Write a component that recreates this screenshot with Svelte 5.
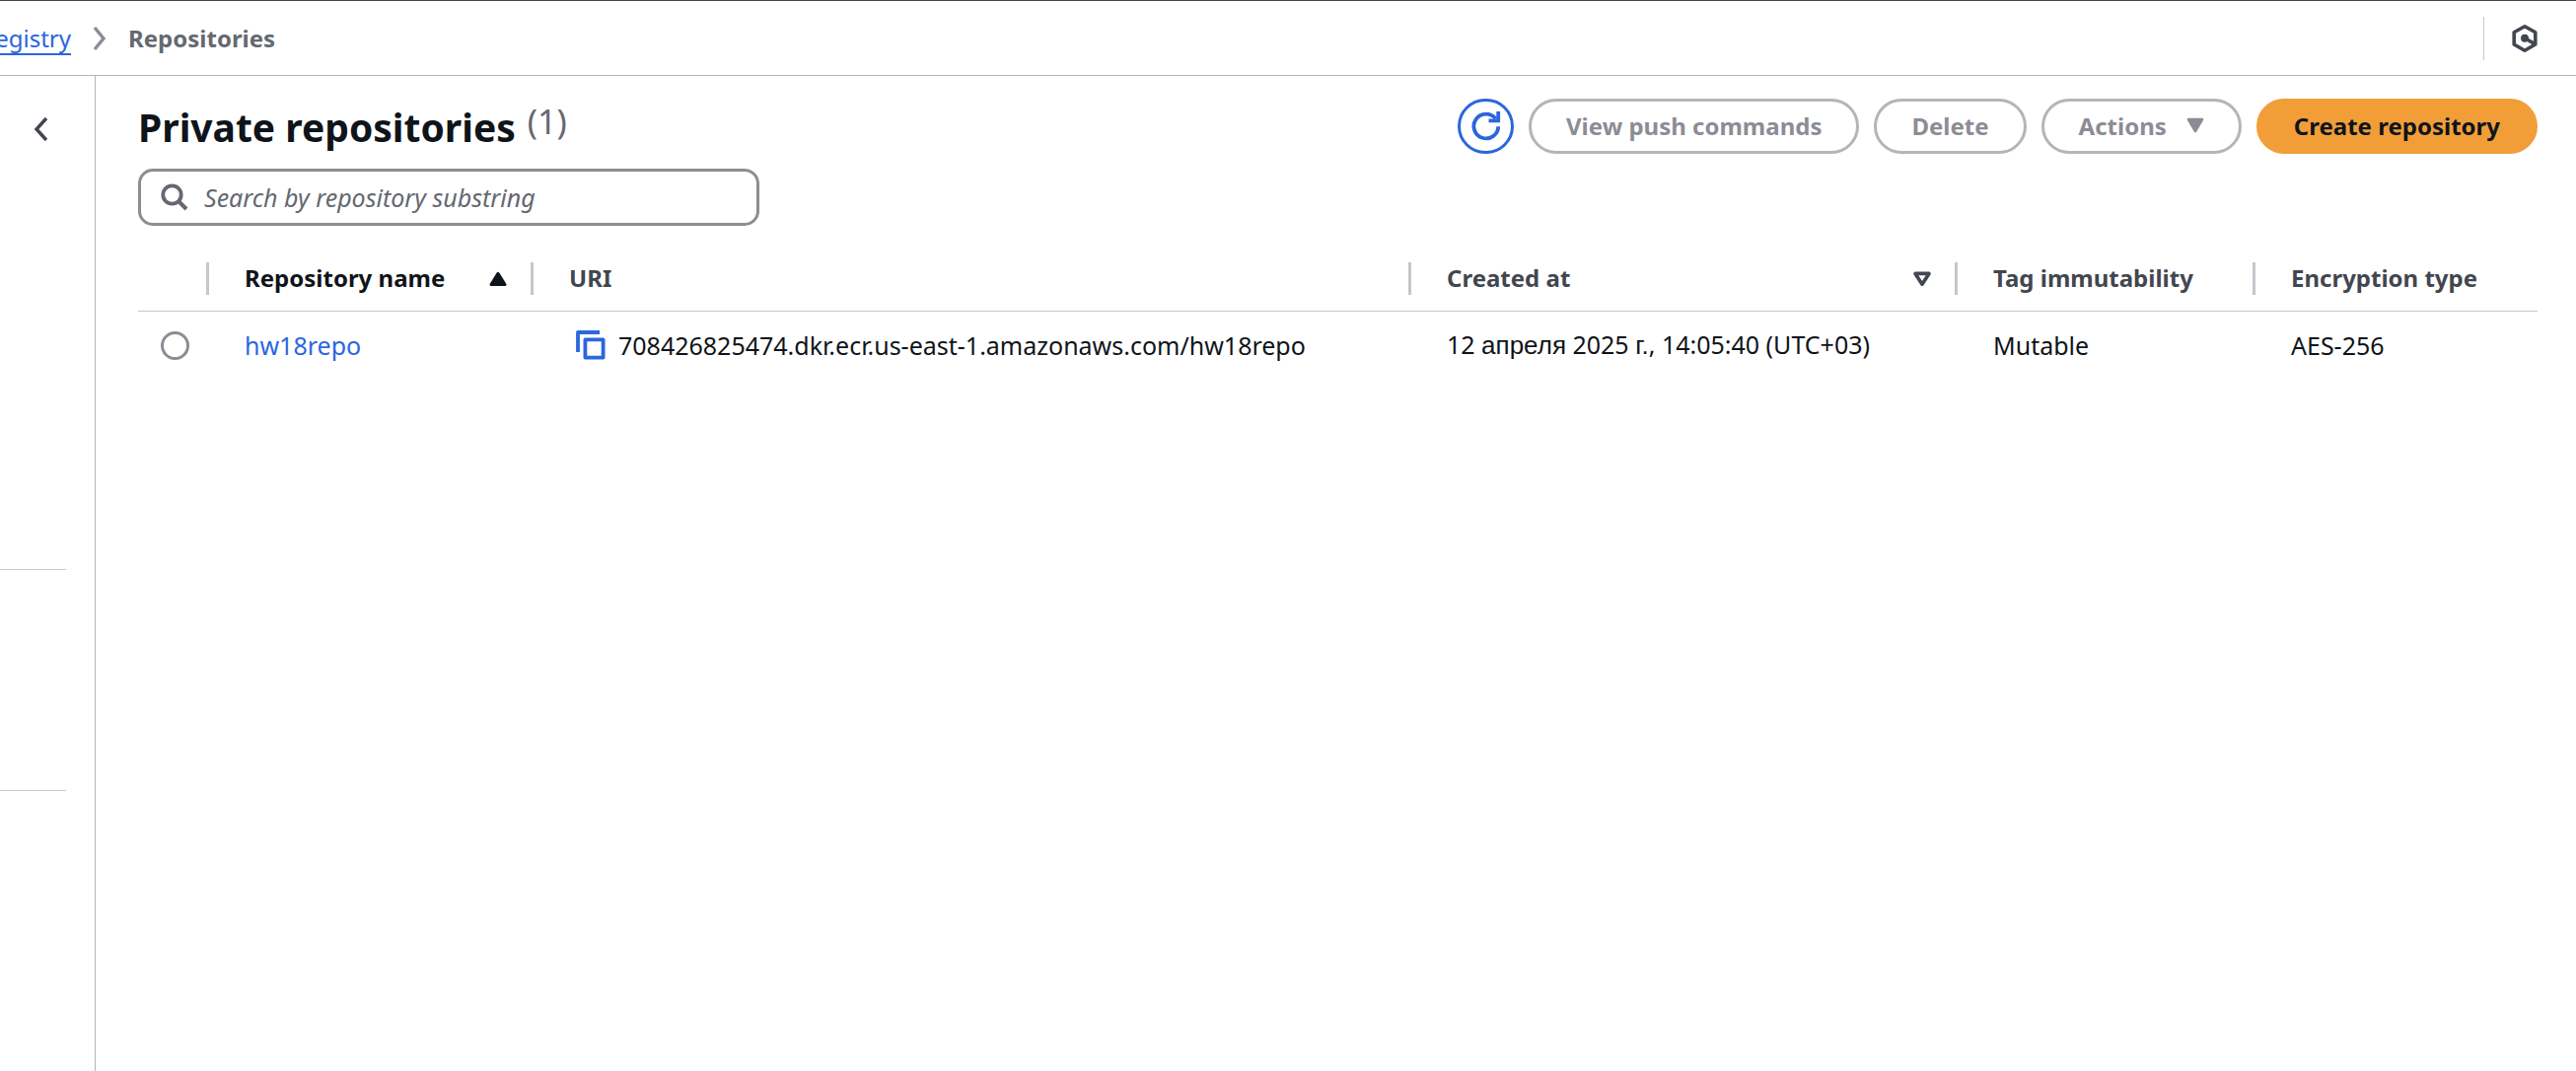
<script>
  const columns = [
    { key: 'name', label: 'Repository name', sort: 'asc' },
    { key: 'uri', label: 'URI' },
    { key: 'created', label: 'Created at', sort: 'none' },
    { key: 'tag', label: 'Tag immutability' },
    { key: 'encryption', label: 'Encryption type' }
  ];
  const rows = [
    {
      name: 'hw18repo',
      uri: '708426825474.dkr.ecr.us-east-1.amazonaws.com/hw18repo',
      created: { day: '12', month: 'апреля', year: '2025', suffix: 'г.', time: '14:05:40 (UTC+03)' },
      tag: 'Mutable',
      encryption: 'AES-256'
    }
  ];
  let selected = $state('');
  let query = $state('');
</script>

<div class="app">
  <header class="topbar">
    <nav class="crumbs" aria-label="Breadcrumbs">
      <a href="#registry">egistry</a>
      <svg width="14" height="26" viewBox="0 0 14 26" aria-hidden="true">
        <path d="M2 2 L11 13 L2 24" fill="none" stroke="#8c8c94" stroke-width="3.4" />
      </svg>
      <span class="current" aria-current="page">Repositories</span>
    </nav>
    <div class="tools">
      <button class="plain" aria-label="Assistant">
        <svg width="28" height="30" viewBox="0 0 28 30" aria-hidden="true">
          <path d="M14 2.8 L24.8 8.8 V21 L14 27.2 L3.2 21 V8.8 Z" fill="none" stroke="#424650" stroke-width="3.6" stroke-linejoin="round" />
          <circle cx="14" cy="14.8" r="4" fill="#424650" />
          <path d="M14 14.8 L24 20.4" stroke="#424650" stroke-width="3.6" />
        </svg>
      </button>
    </div>
  </header>

  <div class="body">
    <aside class="side">
      <button class="plain collapse" aria-label="Close navigation">
        <svg width="16" height="26" viewBox="0 0 16 26" aria-hidden="true">
          <path d="M13 2 L3 13 L13 24" fill="none" stroke="#424650" stroke-width="3.4" />
        </svg>
      </button>
      <hr class="first" />
      <hr class="second" />
    </aside>

    <main>
      <div class="heading">
        <h1>Private repositories</h1>
        <span class="count">(1)</span>
        <div class="actions">
          <button class="btn refresh" aria-label="Refresh">
            <svg width="32" height="32" viewBox="0 0 32 32" aria-hidden="true">
              <path d="M28.2 16.2 A12.4 12.4 0 1 1 25.6 8.4" fill="none" stroke="#2b66dd" stroke-width="3.8" />
              <path d="M28.2 1 V10.4 H18.5" fill="none" stroke="#2b66dd" stroke-width="3.8" />
            </svg>
          </button>
          <button class="btn">View push commands</button>
          <button class="btn">Delete</button>
          <button class="btn menu">
            Actions
            <svg width="18" height="16" viewBox="0 0 18 16" aria-hidden="true">
              <path d="M2 2 H16 L9 14 Z" fill="#8c8c94" stroke="#8c8c94" stroke-width="2.6" stroke-linejoin="round" />
            </svg>
          </button>
          <button class="btn primary">Create repository</button>
        </div>
      </div>

      <label class="search">
        <svg width="28" height="28" viewBox="0 0 28 28" aria-hidden="true">
          <circle cx="11.5" cy="11.5" r="9.2" fill="none" stroke="#656871" stroke-width="3.8" />
          <path d="M18 18 L26 26" stroke="#656871" stroke-width="4" />
        </svg>
        <input type="text" placeholder="Search by repository substring" aria-label="Search by repository substring" bind:value={query} />
      </label>

      <table>
        <thead>
          <tr>
            <th class="c-select" aria-label="Selection"><div class="cell"></div></th>
            {#each columns as col}
              <th class="c-{col.key}" class:sorted={col.sort === 'asc'}>
                <div class="cell">
                  <span>{col.label}</span>
                  {#if col.sort}
                    <svg width="20" height="18" viewBox="0 0 20 18" aria-hidden="true">
                      {#if col.sort === 'asc'}
                        <path d="M10 3.4 L17 14.6 H3 Z" fill="#0f141a" stroke="#0f141a" stroke-width="3" stroke-linejoin="round" />
                      {:else}
                        <path d="M10 14.2 L3 3.4 H17 Z" fill="none" stroke="#424650" stroke-width="3.6" stroke-linejoin="round" />
                      {/if}
                    </svg>
                  {/if}
                </div>
              </th>
            {/each}
          </tr>
        </thead>
        <tbody>
          {#each rows as row}
            <tr>
              <td class="pick">
                <input type="radio" name="repo" value={row.name} aria-label={row.name} bind:group={selected} />
              </td>
              <td><a href="#repo">{row.name}</a></td>
              <td>
                <div class="uri">
                  <button class="plain" aria-label="Copy URI">
                    <svg width="30" height="30" viewBox="0 0 30 30" aria-hidden="true">
                      <path d="M2 22 V2 H24" fill="none" stroke="#2b66dd" stroke-width="3.8" stroke-linejoin="round" />
                      <rect x="9.4" y="9.4" width="18.2" height="18.2" fill="none" stroke="#2b66dd" stroke-width="3.8" stroke-linejoin="round" />
                    </svg>
                  </button>
                  {row.uri}
                </div>
              </td>
              <td>
                {row.created.day} <span class="cyr">{row.created.month}</span> {row.created.year}
                <span class="cyr">{row.created.suffix}</span>, {row.created.time}
              </td>
              <td>{row.tag}</td>
              <td>{row.encryption}</td>
            </tr>
          {/each}
        </tbody>
      </table>
    </main>
  </div>
</div>

<style>
  :global(body) {
    margin: 0;
    background: #fff;
  }
  .app {
    min-height: 100vh;
    display: flex;
    flex-direction: column;
    box-sizing: border-box;
    border-top: 1px solid #424650;
    overflow: hidden;
    font-family: 'Noto Sans', 'Open Sans', sans-serif;
    font-size: 25px;
    line-height: 36px;
    color: #0f141a;
  }
  a {
    color: #2b66dd;
    text-decoration: none;
  }
  .plain {
    display: flex;
    padding: 0;
    border: 0;
    background: none;
  }
  .topbar {
    display: flex;
    justify-content: space-between;
    align-items: center;
    height: 75px;
    border-bottom: 1px solid #b4b4bb;
  }
  .crumbs {
    display: flex;
    align-items: center;
    gap: 22px;
    font-size: 24px;
  }
  .crumbs a {
    width: 72px;
    display: flex;
    justify-content: flex-end;
    text-decoration: underline;
    text-decoration-thickness: 2px;
    text-underline-offset: 6px;
  }
  .crumbs .current {
    font-weight: 700;
    color: #656871;
  }
  .tools {
    display: flex;
    align-items: center;
    height: 44px;
    padding: 0 38px 0 27px;
    border-left: 1px solid #c6c6cd;
  }
  .body {
    flex: 1;
    display: flex;
  }
  .side {
    width: 96px;
    flex: none;
    border-right: 1px solid #b4b4bb;
  }
  .collapse {
    margin: 41px 0 0 34px;
  }
  hr {
    height: 1px;
    margin: 0 29px 0 0;
    border: 0;
    background: #c6c6cd;
  }
  .first {
    margin-top: 433px;
  }
  .second {
    margin-top: 223px;
  }
  main {
    flex: 1;
    min-width: 0;
    padding: 23px 39px 0 43px;
  }
  .heading {
    display: flex;
    align-items: flex-start;
    height: 56px;
  }
  h1 {
    margin: 0;
    font-size: 39px;
    line-height: 58px;
    font-weight: 700;
    white-space: nowrap;
  }
  .count {
    margin-left: 12px;
    font-size: 34px;
    line-height: 46px;
    color: #656871;
  }
  .actions {
    display: flex;
    gap: 15px;
    margin-left: auto;
  }
  .btn {
    display: flex;
    align-items: center;
    height: 56px;
    padding: 0 35px 2px;
    border: 3px solid #b4b4bb;
    border-radius: 28px;
    background: #fff;
    color: #8c8c94;
    font-family: inherit;
    font-size: 24px;
    font-weight: 700;
    white-space: nowrap;
  }
  .menu {
    gap: 20px;
  }
  .refresh {
    width: 57px;
    padding: 0;
    justify-content: center;
    border-color: #2b66dd;
  }
  .primary {
    border-color: #f19e39;
    background: #f19e39;
    color: #0f141a;
  }
  .search {
    display: flex;
    align-items: center;
    gap: 16px;
    box-sizing: border-box;
    width: 630px;
    max-width: 100%;
    height: 58px;
    margin-top: 15px;
    padding: 0 20px;
    border: 3px solid #8c8c94;
    border-radius: 15px;
  }
  .search input {
    flex: 1;
    min-width: 0;
    padding: 0;
    border: 0;
    outline: 0;
    background: none;
    color: #0f141a;
    font: inherit;
  }
  .search input::placeholder {
    color: #656871;
    font-style: italic;
    opacity: 1;
  }
  table {
    width: 100%;
    margin-top: 24px;
    table-layout: fixed;
    border-collapse: collapse;
    white-space: nowrap;
  }
  th {
    padding: 13px 0 16px;
    border-bottom: 1px solid #c6c6cd;
    color: #424650;
    font-size: 24px;
    font-weight: 700;
    text-align: left;
  }
  th.sorted {
    color: #0f141a;
  }
  .cell {
    display: flex;
    align-items: center;
    justify-content: space-between;
    height: 33px;
    padding: 0 23px 0 36px;
    border-right: 3px solid #c6c6cd;
  }
  .cell span {
    padding-bottom: 2px;
  }
  th:last-child .cell {
    border-right: 0;
  }
  .c-select {
    width: 72px;
  }
  .c-name {
    width: 329px;
  }
  .c-created {
    width: 554px;
  }
  .c-tag {
    width: 302px;
  }
  .c-encryption {
    width: 286px;
  }
  td {
    padding: 15px 0 17px 36px;
  }
  .pick {
    padding: 0 0 0 23px;
  }
  .pick input {
    appearance: none;
    display: block;
    width: 29px;
    height: 29px;
    margin: 0;
    border: 3px solid #8c8c94;
    border-radius: 50%;
  }
  .pick input:checked {
    border: 8px solid #2b66dd;
  }
  .uri {
    display: flex;
    align-items: center;
    gap: 13px;
    padding-left: 7px;
  }
  .cyr {
    font-family: 'Liberation Sans', sans-serif;
    font-size: 26px;
  }
</style>
